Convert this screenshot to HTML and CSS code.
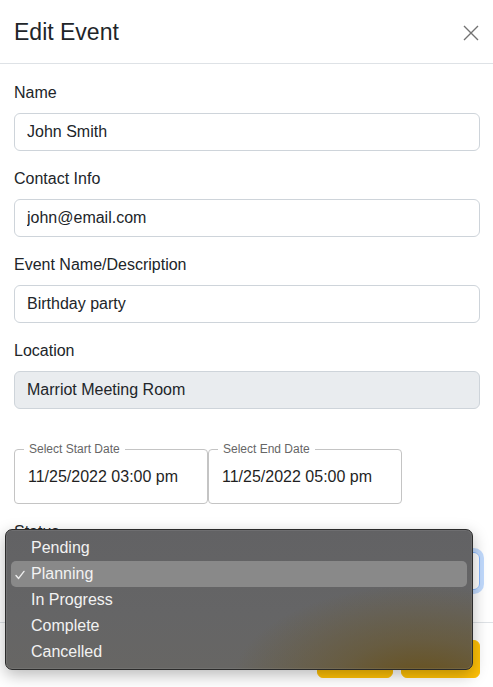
FILE: index.html
```html
<!DOCTYPE html>
<html lang="en">
<head>
<meta charset="utf-8">
<title>Edit Event</title>
<link rel="stylesheet" href="styles.css">
</head>
<body>
<div class="modal">
  <div class="modal-header">
    <h5 class="modal-title">Edit Event</h5>
    <button class="btn-close" aria-label="Close">
      <svg width="16" height="16" viewBox="0 0 16 16"><path d="M1 1L15 15M15 1L1 15" stroke="#000" stroke-width="1.4" fill="none"/></svg>
    </button>
  </div>
  <div class="modal-body">
    <div class="field">
      <label class="form-label">Name</label>
      <input class="form-control" type="text" value="John Smith">
    </div>
    <div class="field">
      <label class="form-label">Contact Info</label>
      <input class="form-control" type="text" value="john@email.com">
    </div>
    <div class="field">
      <label class="form-label">Event Name/Description</label>
      <input class="form-control" type="text" value="Birthday party">
    </div>
    <div class="field">
      <label class="form-label">Location</label>
      <input class="form-control disabled" type="text" value="Marriot Meeting Room" disabled>
    </div>
    <div class="date-row">
      <fieldset class="date-field">
        <legend>Select Start Date</legend>
        <div class="date-value">11/25/2022 03:00 pm</div>
      </fieldset>
      <fieldset class="date-field">
        <legend>Select End Date</legend>
        <div class="date-value">11/25/2022 05:00 pm</div>
      </fieldset>
    </div>
    <div class="field last">
      <label class="form-label">Status</label>
      <div class="form-select">Planning</div>
    </div>
  </div>
  <div class="modal-footer">
    <button class="btn btn-warning">Cancel</button>
    <button class="btn btn-warning">Update</button>
  </div>

  <div class="select-menu">
    <div class="menu-item">Pending</div>
    <div class="menu-item selected">
      <svg class="check" width="10" height="10" viewBox="0 0 10 10"><path d="M1 5.6L3.6 8.4L9 1.4" stroke="#eeeeee" stroke-width="1.4" fill="none" stroke-linecap="round" stroke-linejoin="round"/></svg>
      Planning
    </div>
    <div class="menu-item">In Progress</div>
    <div class="menu-item">Complete</div>
    <div class="menu-item">Cancelled</div>
  </div>
</div>
</body>
</html>
```
FILE: styles.css
```css
* { box-sizing: border-box; }

html, body {
  margin: 0;
  padding: 0;
  background: #ffffff;
}

body {
  font-family: "Liberation Sans", Arial, Helvetica, sans-serif;
  font-size: 16px;
  line-height: 24px;
  color: #212529;
}

.modal {
  position: relative;
  width: 493px;
  height: 687px;
  overflow: hidden;
}

.modal-header {
  display: flex;
  align-items: center;
  justify-content: space-between;
  height: 64px;
  padding: 1px 13px 0 14px;
  border-bottom: 1px solid #dee2e6;
}

.modal-title {
  margin: 0;
  font-size: 23px;
  line-height: 31px;
  font-weight: 400;
  color: #212529;
}

.btn-close {
  display: flex;
  align-items: center;
  justify-content: center;
  width: 24px;
  height: 24px;
  padding: 0;
  margin-right: -3px;
  margin-top: 1px;
  border: 0;
  background: transparent;
  opacity: 0.55;
}

.modal-body {
  padding: 17px 13px 16px 14px;
}

.field {
  margin-bottom: 16px;
}

.form-label {
  display: block;
  margin-bottom: 8px;
  line-height: 24px;
}

.form-control {
  display: block;
  width: 100%;
  height: 38px;
  padding: 6px 12px;
  font-family: inherit;
  font-size: 16px;
  line-height: 24px;
  color: #212529;
  background: #ffffff;
  border: 1px solid #ced4da;
  border-radius: 6px;
  outline: none;
}

.form-control.disabled {
  background: #e9ecef;
  color: #212529;
  -webkit-text-fill-color: #212529;
  opacity: 1;
}

.date-row {
  display: flex;
  margin-top: 33px;
  margin-bottom: 16px;
}

.date-field {
  width: 194px;
  margin: 0;
  padding: 0 13px 0 9px;
  border: 1px solid #c4c4c4;
  border-radius: 4px;
  min-width: 0;
}

.date-field legend {
  padding: 0 5px;
  font-size: 12px;
  line-height: 14px;
  color: #666666;
}

.date-value {
  padding: 9px 0 14px 4px;
  font-size: 16px;
  line-height: 24px;
  color: #1f1f1f;
  white-space: nowrap;
}

.form-select {
  height: 38px;
  padding: 6px 12px;
  border: 1px solid #86b7fe;
  border-radius: 6px;
  box-shadow: 0 0 0 4px rgba(13, 110, 253, 0.25);
}

.modal-footer {
  display: flex;
  justify-content: flex-end;
  padding: 12px 9px 12px 12px;
  border-top: 1px solid #dee2e6;
}

.btn {
  height: 38px;
  margin: 5px 4px 4px;
  padding: 6px 12px;
  font-family: inherit;
  font-size: 16px;
  line-height: 24px;
  border: 1px solid #ffc107;
  border-radius: 6px;
}

.btn-warning {
  background: #ffc107;
  color: #000000;
}

.btn-warning:first-child {
  width: 76px;
}

.btn-warning:last-child {
  width: 79px;
}

/* native select popup (overlay) */
.select-menu {
  position: absolute;
  left: 5px;
  top: 529px;
  width: 468px;
  height: 141px;
  padding: 5px 5px 4px;
  border: 1px solid #2b2b2b;
  border-radius: 7px;
  background:
    radial-gradient(ellipse 190px 100px at 415px 155px, rgba(104, 80, 24, 1) 0%, rgba(104, 88, 50, 0.7) 45%, rgba(100, 100, 102, 0) 100%),
    linear-gradient(180deg, #626264 0%, #656566 60%, #676664 100%);
  box-shadow: 0 5px 16px rgba(0, 0, 0, 0.28), inset 0 0 0 1px rgba(255, 255, 255, 0.08);
}

.menu-item {
  position: relative;
  height: 26px;
  padding-left: 20px;
  font-size: 16px;
  line-height: 26px;
  color: #f2f2f2;
  border-radius: 5px;
}

.menu-item.selected {
  background: rgba(150, 150, 150, 0.75);
}

.check {
  position: absolute;
  left: 4px;
  top: 9px;
}
```
